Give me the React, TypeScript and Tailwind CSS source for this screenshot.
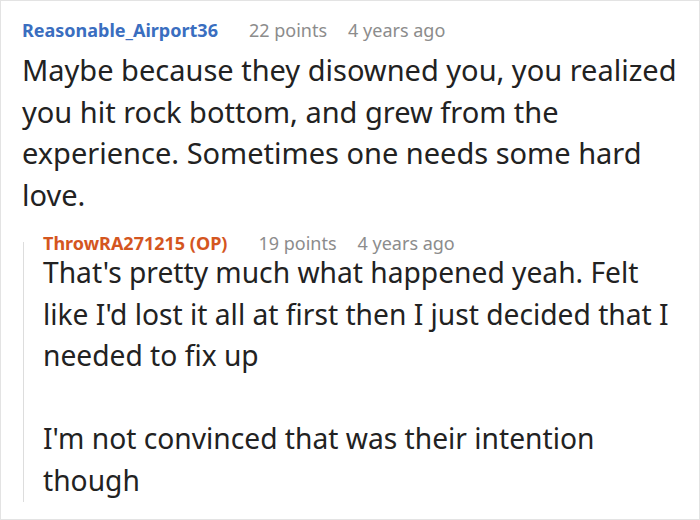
const font = { fontFamily: '"Noto Sans", "Open Sans", sans-serif' };

export default function App() {
  return (
    <div
      style={font}
      className="w-[700px] h-[520px] border border-[#e3e3e3] bg-white overflow-hidden"
    >
      {/* Parent comment */}
      <div className="pl-[21px] pr-[12px] pt-[19px]">
        <div className="flex items-center h-[20px] text-[18px] leading-[20px]">
          <span className="font-bold text-[#3a6ec0]">Reasonable_Airport36</span>
          <span className="ml-[31px] text-[#8c8c8c]">22 points</span>
          <span className="ml-[21px] text-[#8c8c8c]">4 years ago</span>
        </div>
        <p className="mt-[9px] text-[29px] leading-[41.6px] text-[#222]">
          Maybe because they disowned you, you realized you hit rock bottom, and grew from the
          experience. Sometimes one needs some hard love.
        </p>
      </div>

      {/* Reply */}
      <div className="ml-[22px] mt-[26.6px] flex flex-col border-l border-[#dddddd] pl-[19px] pr-[16px]">
        <div className="-mt-[8px] flex items-center h-[18px] text-[18px] leading-[18px]">
          <span className="font-bold text-[#d4561f]">ThrowRA271215 (OP)</span>
          <span className="ml-[31px] text-[#8c8c8c]">19 points</span>
          <span className="ml-[21px] text-[#8c8c8c]">4 years ago</span>
        </div>
        <div className="text-[28.2px] leading-[41.6px] text-[#222]">
          <p>
            That's pretty much what happened yeah. Felt like I'd lost it all at first then I
            just decided that I needed to fix up
          </p>
          <p className="mt-[41.6px]">I'm not convinced that was their intention though</p>
        </div>
      </div>
    </div>
  );
}
